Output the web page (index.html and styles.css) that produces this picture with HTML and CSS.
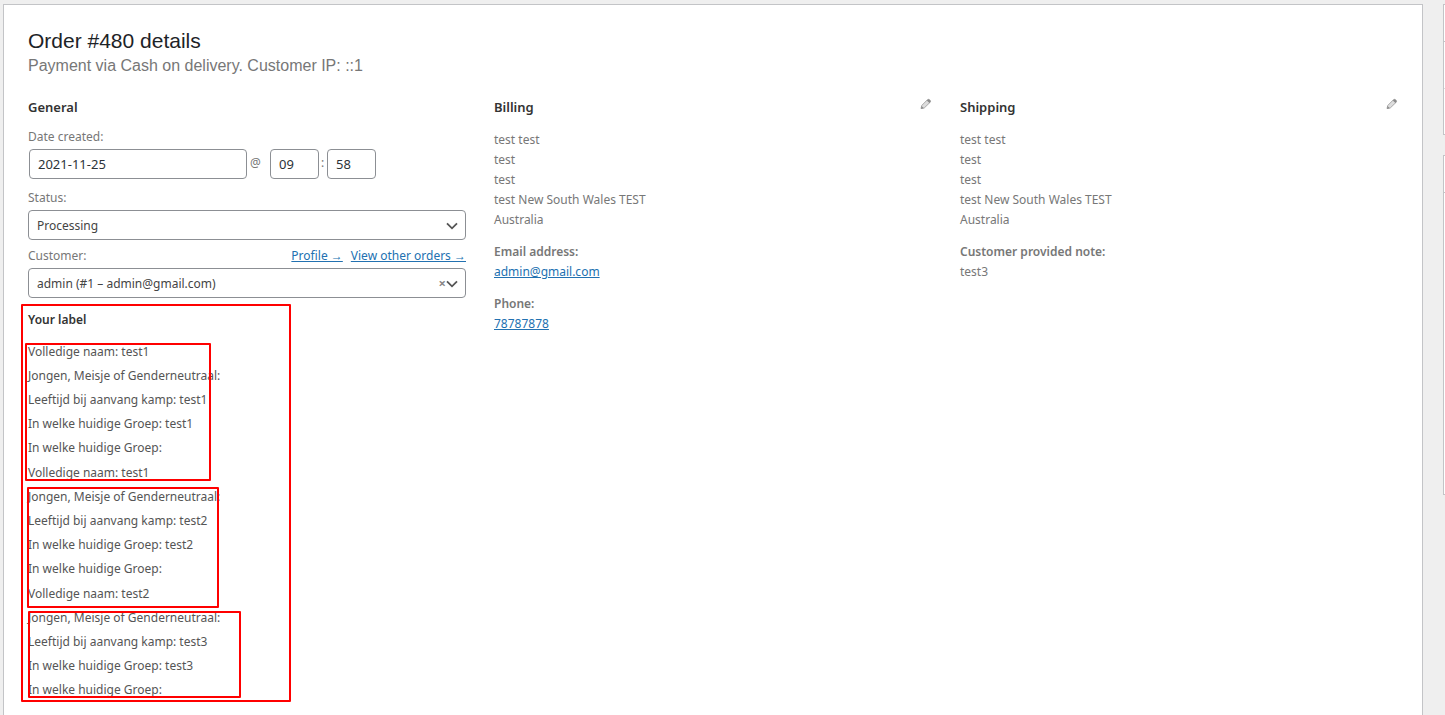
FILE: index.html
```html
<!DOCTYPE html>
<html lang="en">
<head>
<meta charset="UTF-8">
<meta name="viewport" content="width=device-width, initial-scale=1.0">
<title>Edit order</title>
<link rel="stylesheet" href="styles.css">
</head>
<body>

<div class="wrap">
    <main class="order-panel">
        <h1>Order #480 details</h1>
        <p class="order-meta">Payment via Cash on delivery. Customer IP: ::1</p>

        <div class="order-columns">
            <section class="column">
                <h2>General</h2>
                <form class="general-fields">
                    <div class="field">
                        <label for="order-date">Date created:</label>
                        <div class="date-row">
                            <input type="text" class="date" id="order-date" value="2021-11-25">
                            <span class="at">@</span>
                            <input type="text" class="time" aria-label="Hour" value="09">
                            <span class="colon">:</span>
                            <input type="text" class="time" aria-label="Minute" value="58">
                        </div>
                    </div>

                    <div class="field">
                        <label for="order-status">Status:</label>
                        <div class="select-box">
                            <select id="order-status">
                                <option>Processing</option>
                            </select>
                            <svg class="chevron" viewBox="0 0 12 8"><path d="M1 1.3l5 5 5-5" fill="none" stroke="#555" stroke-width="1.8"/></svg>
                        </div>
                    </div>

                    <div class="field">
                        <div class="label-row">
                            <label for="order-customer">Customer:</label>
                            <span class="customer-links">
                                <a href="#">Profile →</a>
                                <a href="#">View other orders →</a>
                            </span>
                        </div>
                        <div class="select-box">
                            <select id="order-customer">
                                <option>admin (#1 – admin@gmail.com)</option>
                            </select>
                            <button type="button" class="clear" aria-label="Clear customer">×</button>
                            <svg class="chevron" viewBox="0 0 12 8"><path d="M1 1.3l5 5 5-5" fill="none" stroke="#555" stroke-width="1.8"/></svg>
                        </div>
                    </div>
                </form>

                <div class="custom-fields">
                    <h2>Your label</h2>
                    <ul>
                        <li>Volledige naam: test1</li>
                        <li>Jongen, Meisje of Genderneutraal:</li>
                        <li>Leeftijd bij aanvang kamp: test1</li>
                        <li>In welke huidige Groep: test1</li>
                        <li>In welke huidige Groep:</li>
                    </ul>
                    <ul>
                        <li>Volledige naam: test1</li>
                        <li>Jongen, Meisje of Genderneutraal:</li>
                        <li>Leeftijd bij aanvang kamp: test2</li>
                        <li>In welke huidige Groep: test2</li>
                        <li>In welke huidige Groep:</li>
                    </ul>
                    <ul>
                        <li>Volledige naam: test2</li>
                        <li>Jongen, Meisje of Genderneutraal:</li>
                        <li>Leeftijd bij aanvang kamp: test3</li>
                        <li>In welke huidige Groep: test3</li>
                        <li>In welke huidige Groep:</li>
                    </ul>
                    <!-- red marks over the list -->
                    <div class="mark mark-all"></div>
                    <div class="mark mark-first"></div>
                    <div class="mark mark-second"></div>
                    <div class="mark mark-third"></div>
                </div>
            </section>

            <section class="column">
                <div class="column-head">
                    <h2>Billing</h2>
                    <a href="#" class="edit" aria-label="Edit billing">
                        <svg viewBox="0 0 12 12"><path d="M1 10.6l.8-3.2L7.4 1.8Q8.6.8 9.8 2 11 3.2 10 4.4L4.3 9.9z" fill="#ddd" stroke="#aaa"/><path d="M6.8 2.4L9.4 5l1.1-1.1Q11 3 9.9 1.9 8.8.9 7.9 1.4zM1 10.8l.6-2.8 2.2 2.2z" fill="#8c8c8c"/></svg>
                    </a>
                </div>
                <div class="address">
                    <p>test test<br>test<br>test<br>test New South Wales TEST<br>Australia</p>
                    <p><strong>Email address:</strong><br><a href="mailto:admin@gmail.com">admin@gmail.com</a></p>
                    <p><strong>Phone:</strong><br><a href="tel:78787878">78787878</a></p>
                </div>
            </section>

            <section class="column">
                <div class="column-head">
                    <h2>Shipping</h2>
                    <a href="#" class="edit" aria-label="Edit shipping">
                        <svg viewBox="0 0 12 12"><path d="M1 10.6l.8-3.2L7.4 1.8Q8.6.8 9.8 2 11 3.2 10 4.4L4.3 9.9z" fill="#ddd" stroke="#aaa"/><path d="M6.8 2.4L9.4 5l1.1-1.1Q11 3 9.9 1.9 8.8.9 7.9 1.4zM1 10.8l.6-2.8 2.2 2.2z" fill="#8c8c8c"/></svg>
                    </a>
                </div>
                <div class="address">
                    <p>test test<br>test<br>test<br>test New South Wales TEST<br>Australia</p>
                    <p><strong>Customer provided note:</strong><br>test3</p>
                </div>
            </section>
        </div>
    </main>

    <aside class="sidebar">
        <div class="side-box">
            <div class="side-head"></div>
            <div class="side-row"></div>
            <div class="side-row"></div>
        </div>
        <div class="side-box">
            <div class="side-head"></div>
            <div class="side-notes"></div>
        </div>
    </aside>
</div>

</body>
</html>
```
FILE: styles.css
```css
* {
    box-sizing: border-box;
}

body {
    margin: 0;
    height: 100vh;
    overflow: hidden;
    background: #efefef;
    color: #777;
    font-family: "Noto Sans", "Open Sans", sans-serif;
    font-size: 12px;
    line-height: 20px;
}

h1, h2, p, ul {
    margin: 0;
    padding: 0;
    font-weight: normal;
}

a {
    color: #2271b1;
}

.wrap {
    display: flex;
    gap: 20px;
    padding: 4px 0 0 3px;
}

.order-panel {
    flex: 1;
    min-height: 100vh;
    padding: 24px;
    background: #fff;
    border: 1px solid #c3c4c7;
}

.order-panel h1 {
    color: #1d2327;
    font-family: "Liberation Sans", Arial, sans-serif;
    font-size: 21px;
    line-height: 24px;
}

.order-meta {
    font-family: "Liberation Sans", Arial, sans-serif;
    font-size: 16px;
    line-height: 26px;
}

.order-columns {
    display: grid;
    grid-template-columns: repeat(3, 1fr);
    gap: 28px;
    margin-top: 18px;
}

.column h2 {
    color: #333;
    font-size: 13px;
    font-weight: 600;
}

/* General */
.general-fields {
    margin-top: 10px;
}

.field {
    margin-bottom: 6px;
}

.field label {
    display: block;
}

.label-row {
    display: flex;
    justify-content: space-between;
}

.customer-links {
    display: flex;
    gap: 8px;
}

.date-row {
    display: flex;
    margin: 2px 1px 9px;
}

.date-row input,
.select-box select {
    height: 30px;
    padding: 0 8px;
    border: 1px solid #8c8f94;
    border-radius: 4px;
    background: #fff;
    color: #2c3338;
    font-family: inherit;
}

.date-row input {
    font-size: 13px;
}

.date-row .date {
    width: 50%;
}

.date-row .time {
    width: 49px;
}

.at {
    width: 23px;
    padding: 4px 3px;
}

.colon {
    width: 8px;
    padding: 4px 2px;
}

.select-box {
    position: relative;
    margin-top: 2px;
}

.select-box select {
    display: block;
    width: 100%;
    appearance: none;
    color: #444;
    font-size: 12px;
}

.chevron {
    position: absolute;
    top: 12px;
    right: 8px;
    width: 12px;
    height: 8px;
    pointer-events: none;
}

.clear {
    position: absolute;
    top: 5px;
    right: 20px;
    padding: 0;
    border: 0;
    background: none;
    color: #888;
    font: bold 13px/20px "Open Sans", sans-serif;
}

/* Custom fields */
.custom-fields {
    position: relative;
    margin-top: 12px;
    color: #555;
}

.custom-fields h2 {
    margin-bottom: 10px;
    font-size: 12px;
}

.custom-fields ul {
    margin-bottom: 1px;
    list-style: none;
    line-height: 24px;
}

.mark {
    position: absolute;
    border: 2px solid #f00;
    border-radius: 1px;
    pointer-events: none;
}

.mark-all {
    top: -6px;
    left: -7px;
    width: 270px;
    height: 398px;
}

.mark-first {
    top: 33px;
    left: -3px;
    width: 186px;
    height: 138px;
}

.mark-second {
    top: 177px;
    left: -1px;
    width: 192px;
    height: 121px;
}

.mark-third {
    top: 301px;
    left: 0;
    width: 213px;
    height: 87px;
}

/* Billing and shipping */
.column-head {
    display: flex;
    justify-content: space-between;
    margin-bottom: 13px;
}

.edit svg {
    display: block;
    width: 12px;
    height: 12px;
    margin-top: 1px;
}

.address p {
    margin-bottom: 12px;
}

.address strong {
    font-weight: 600;
}

/* Sidebar */
.sidebar {
    flex: 0 0 2px;
    overflow: hidden;
}

.side-box {
    width: 280px;
    margin-bottom: 20px;
    background: #fff;
    border: 1px solid #c3c4c7;
}

.side-head {
    height: 37px;
    border-bottom: 1px solid #c3c4c7;
}

.side-row {
    height: 46px;
}

.side-row + .side-row {
    border-top: 1px solid #ddd;
}

.side-notes {
    height: 301px;
}
```
